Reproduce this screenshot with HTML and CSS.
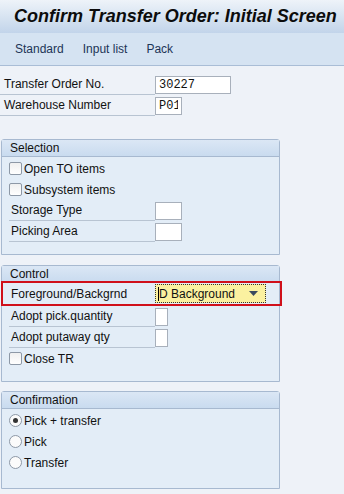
FILE: index.html
```html
<!DOCTYPE html>
<html lang="en">
<head>
    <meta charset="UTF-8">
    <title>Confirm Transfer Order: Initial Screen</title>
    <link rel="stylesheet" href="styles.css">
</head>
<body>
    <div class="titleBar">
        <h1>Confirm Transfer Order: Initial Screen</h1>
    </div>
    <div class="toolbar">
        <span>Standard</span>
        <span>Input list</span>
        <span>Pack</span>
    </div>

    <div class="headerFields">
        <div class="fieldRow">
            <label class="fieldLabel">Transfer Order No.</label>
            <input class="field wide" type="text" value="30227">
        </div>
        <div class="fieldRow">
            <label class="fieldLabel">Warehouse Number</label>
            <input class="field small" type="text" value="P01">
        </div>
    </div>

    <div class="group selectionGroup">
        <div class="groupTitle">Selection</div>
        <div class="groupBody">
            <div class="checkRow"><span class="checkbox"></span>Open TO items</div>
            <div class="checkRow"><span class="checkbox"></span>Subsystem items</div>
            <div class="fieldRow">
                <label class="fieldLabel">Storage Type</label>
                <input class="field small" type="text">
            </div>
            <div class="fieldRow">
                <label class="fieldLabel">Picking Area</label>
                <input class="field small" type="text">
            </div>
        </div>
    </div>

    <div class="group controlGroup">
        <div class="groupTitle">Control</div>
        <div class="groupBody">
            <div class="highlightRow">
                <div class="fieldRow">
                    <label class="fieldLabel">Foreground/Backgrnd</label>
                    <div class="dropdown">
                        <span class="caret"></span><span class="dropText">D Background</span>
                        <svg class="arrow" width="9" height="5" viewBox="0 0 9 5"><path d="M0 0h9L4.5 5z" fill="#3a4a5e"/></svg>
                    </div>
                </div>
            </div>
            <div class="fieldRow">
                <label class="fieldLabel">Adopt pick.quantity</label>
                <input class="field tiny" type="text">
            </div>
            <div class="fieldRow">
                <label class="fieldLabel">Adopt putaway qty</label>
                <input class="field tiny" type="text">
            </div>
            <div class="checkRow"><span class="checkbox"></span>Close TR</div>
        </div>
    </div>

    <div class="group confirmGroup">
        <div class="groupTitle">Confirmation</div>
        <div class="groupBody">
            <div class="checkRow"><span class="radio checked"></span>Pick + transfer</div>
            <div class="checkRow"><span class="radio"></span>Pick</div>
            <div class="checkRow"><span class="radio"></span>Transfer</div>
        </div>
    </div>
</body>
</html>
```

FILE: styles.css
```css
body {
    margin: 0;
    background: #eef2f8;
    font-family: 'Liberation Sans', Arial, sans-serif;
    font-size: 12px;
    color: #111;
}

.titleBar {
    height: 33px;
    background: linear-gradient(#eef3f9, #dce7f3 40%, #c2d4ea);
    box-sizing: border-box;
    padding-left: 14px;
}

.titleBar h1 {
    margin: 0;
    font-size: 18px;
    line-height: 33px;
    font-style: italic;
    font-weight: bold;
    color: #0c0c0c;
    white-space: nowrap;
}

.toolbar {
    height: 33px;
    box-sizing: border-box;
    background: #d5e3f2;
    border-bottom: 1px solid #a9bdd6;
    display: flex;
    align-items: center;
    gap: 19px;
    padding-left: 15px;
    color: #1d3557;
}

.headerFields {
    padding-top: 8px;
    margin-bottom: 23px;
}

.fieldRow {
    display: flex;
    align-items: center;
    height: 21px;
}

.fieldLabel {
    width: 155px;
    padding-left: 4px;
    align-self: stretch;
    display: flex;
    align-items: center;
    border-bottom: 1px solid #b8c4d2;
    box-sizing: border-box;
}

.field {
    height: 18px;
    box-sizing: border-box;
    border: 1px solid #a8b0bb;
    background: #fff;
    font-family: 'Liberation Mono', monospace;
    font-size: 12px;
    padding: 0 3px;
    margin: 0;
    color: #111;
}

.field.wide {
    width: 76px;
}

.field.small {
    width: 27px;
}

.field.tiny {
    width: 13px;
}

.group {
    margin: 0 0 10px 1px;
    width: 279px;
    box-sizing: border-box;
    border: 1px solid #a7b9d0;
    border-radius: 3px 3px 0 0;
    background: #e3edf7;
}

.groupTitle {
    height: 16px;
    line-height: 16px;
    padding-left: 8px;
    background: linear-gradient(#dbe7f5, #c9dbef);
    border-bottom: 1px solid #a7b9d0;
}

.groupBody {
    padding: 1px 0 12px 7px;
}

.controlGroup {
    margin-bottom: 9px;
}

.controlGroup .groupBody {
    padding: 0 0 12px 0;
}

.controlGroup .fieldRow,
.controlGroup .checkRow {
    margin-left: 7px;
}

.confirmGroup .groupBody {
    padding-bottom: 15px;
}

.groupBody .fieldLabel {
    width: 146px;
    padding-left: 2px;
}

.checkRow {
    display: flex;
    align-items: center;
    height: 21px;
}

.checkbox {
    width: 13px;
    height: 13px;
    box-sizing: border-box;
    border: 1px solid #8d98a6;
    border-radius: 2px;
    background: linear-gradient(#f0f0f0, #fff);
    margin-right: 2px;
}

.radio {
    width: 13px;
    height: 13px;
    box-sizing: border-box;
    border: 1px solid #8d98a6;
    border-radius: 50%;
    background: #fbfbfb;
    margin-right: 2px;
    position: relative;
}

.radio.checked::after {
    content: '';
    position: absolute;
    left: 3px;
    top: 3px;
    width: 5px;
    height: 5px;
    border-radius: 50%;
    background: #333;
}

.highlightRow {
    border: 2px solid #d0101a;
    margin: -2px -1px 0 -1px;
    height: 25px;
    width: 281px;
    box-sizing: border-box;
    display: flex;
    align-items: center;
    position: relative;
}

.highlightRow .fieldRow {
    margin-left: 6px;
}

.highlightRow .fieldLabel {
    border-bottom: none;
}

.dropdown {
    width: 111px;
    height: 19px;
    box-sizing: border-box;
    border: 1px dotted #333;
    background: #fbf1a0;
    display: flex;
    align-items: center;
    padding-left: 2px;
    font-size: 12px;
}

.caret {
    width: 1px;
    height: 14px;
    background: #000;
}

.dropText {
    flex: 1;
}

.arrow {
    margin-right: 7px;
}
```
